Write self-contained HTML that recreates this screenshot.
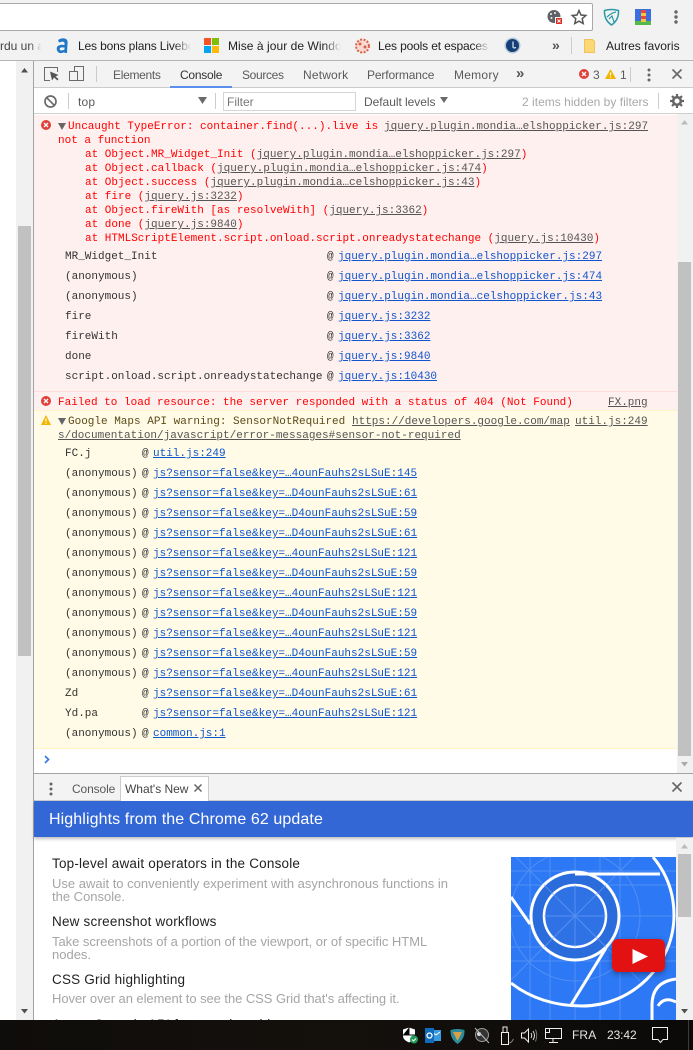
<!DOCTYPE html>
<html><head><meta charset="utf-8"><style>
*{box-sizing:border-box}
html,body{margin:0;padding:0;width:693px;height:1050px;overflow:hidden;background:#fff}
body{position:relative;font-family:"Liberation Sans",sans-serif}
.b{position:absolute}
.t{position:absolute;white-space:nowrap;font-size:12px;line-height:14px;color:#5a5a5a}
.m{position:absolute;white-space:pre;font-family:"Liberation Mono",monospace;font-size:11px;line-height:14px;color:#333;transform:translateY(1px)}
.r{color:#f00}
u{text-decoration:underline}
.g{color:#555}
.l{color:#15c}
.h{position:absolute;white-space:nowrap;font-size:13.5px;line-height:16px;color:#222;left:52px;letter-spacing:.2px}
.p{position:absolute;white-space:nowrap;font-size:13px;line-height:13px;color:#a5a5a5;left:52px}
svg{position:absolute;overflow:visible}
</style></head><body>

<!-- browser top -->
<div class="b" style="left:0;top:0;width:693px;height:61px;background:#f2f2f2"></div>
<div class="b" style="left:-4px;top:3px;width:597px;height:28px;background:#fff;border:1px solid #a9a9a9;border-radius:2px"></div>
<div class="b" style="left:0;top:60px;width:693px;height:1px;background:#b5b5b5"></div>

<!-- address icons -->
<svg style="left:546px;top:9px" width="18" height="18" viewBox="0 0 18 18"><circle cx="8" cy="7.5" r="6.5" fill="#5f6368"/><circle cx="5" cy="5" r="1" fill="#f2f2f2"/><circle cx="9" cy="4" r="1" fill="#f2f2f2"/><circle cx="5.5" cy="9" r="1" fill="#f2f2f2"/><rect x="9.500" y="8.500" width="7" height="7" fill="#d93025" stroke="#fff"/><path d="M11.500 10.500l3 3m0-3l-3 3" stroke="#fff"/></svg>
<svg style="left:571px;top:9px" width="16" height="16" viewBox="0 0 16 16"><path d="M8 1.500l2 4.500 4.800.5-3.600 3.200 1 4.800L8 12.100 3.800 14.500l1-4.800L1.200 6.500 6 6z" fill="none" stroke="#555" stroke-width="1.500"/></svg>
<svg style="left:603px;top:8px" width="17" height="18" viewBox="0 0 17 18"><path d="M1.500 2.500Q8.500 .5 15.500 2.500Q16 12 8.500 17Q1 12 1.500 2.500z" fill="none" stroke="#2b9aa8" stroke-width="1.500"/><path d="M4 9q4-4 9-5M6 11l3-3 2 6" fill="none" stroke="#2b9aa8" stroke-width="1.200"/></svg>
<div class="b" style="left:635px;top:9px;width:16px;height:16px;background:#3b6fe0"></div>
<div class="b" style="left:635px;top:21px;width:16px;height:4px;background:#55b84a"></div>
<div class="b" style="left:641px;top:10px;width:5px;height:12px;background:repeating-linear-gradient(#e64a3b 0 3px,#f4c542 3px 6px)"></div>
<svg style="left:673px;top:9px" width="6" height="16"><circle cx="3" cy="3" r="1.700" fill="#666"/><circle cx="3" cy="8" r="1.700" fill="#666"/><circle cx="3" cy="13" r="1.700" fill="#666"/></svg>

<!-- bookmarks -->
<div class="t" style="left:0;top:39px;font-size:12px;color:#444;width:42px;overflow:hidden;-webkit-mask-image:linear-gradient(90deg,#000 70%,transparent)">rdu un a</div>
<svg style="left:56px;top:37px" width="13" height="17" viewBox="0 0 13 17"><path d="M2 3Q6 0 10 2Q12 3 11.500 7L11 16H8.500V15Q5 17 2.500 15.500Q0 13 1 10Q3 7 8.500 8V6Q8 3.500 3 5.500z M4 11Q3 13 5 13.500Q7 13.500 8.500 12.500V10.500Q5 10 4 11z" fill="#1f78c8" fill-rule="evenodd"/></svg>
<div class="t" style="left:78px;top:39px;width:113px;overflow:hidden;color:#222;letter-spacing:-.15px;-webkit-mask-image:linear-gradient(90deg,#000 85%,transparent)">Les bons plans Livebox</div>
<div class="b" style="left:204px;top:38px;width:7px;height:7px;background:#f35325"></div>
<div class="b" style="left:212px;top:38px;width:7px;height:7px;background:#81bc06"></div>
<div class="b" style="left:204px;top:46px;width:7px;height:7px;background:#05a6f0"></div>
<div class="b" style="left:212px;top:46px;width:7px;height:7px;background:#ffba08"></div>
<div class="t" style="left:228px;top:39px;width:113px;overflow:hidden;color:#222;letter-spacing:.05px;-webkit-mask-image:linear-gradient(90deg,#000 85%,transparent)">Mise à jour de Windows</div>
<svg style="left:354px;top:38px" width="17" height="16" viewBox="0 0 17 16"><circle cx="8.500" cy="8" r="6.500" fill="#f7d9cf" stroke="#d9634a" stroke-width="2" stroke-dasharray="2 1.500"/><circle cx="6" cy="6" r="1.500" fill="#d9634a"/><circle cx="11" cy="9" r="1.500" fill="#d9634a"/></svg>
<div class="t" style="left:378px;top:39px;width:112px;overflow:hidden;color:#222;letter-spacing:-.15px;-webkit-mask-image:linear-gradient(90deg,#000 85%,transparent)">Les pools et espaces de</div>
<svg style="left:504px;top:37px" width="17" height="17" viewBox="0 0 17 17"><circle cx="8.500" cy="8.500" r="8" fill="#b4c8d6"/><circle cx="8.500" cy="8.500" r="6.500" fill="#163f78"/><path d="M9 4.500V10q0 1.500 3 .5" fill="none" stroke="#cfe0ee" stroke-width="1.300"/></svg>
<div class="t" style="left:552px;top:38px;color:#555;font-size:14px;font-weight:bold">»</div>
<div class="b" style="left:571px;top:37px;width:1px;height:17px;background:#ccc"></div>
<svg style="left:584px;top:39px" width="13" height="14" viewBox="0 0 13 14"><path d="M.5.500h8l2 2V13.500H.5z" fill="#fbd775" stroke="#eec45a"/></svg>
<div class="t" style="left:606px;top:39px;color:#222;letter-spacing:.02px">Autres favoris</div>

<!-- left page scrollbar -->
<div class="b" style="left:16px;top:61px;width:17px;height:959px;background:#f1f1f1"></div>
<div class="b" style="left:18px;top:226px;width:13px;height:430px;background:#c1c1c1"></div>
<svg style="left:21px;top:68px" width="7" height="5"><path d="M0 4.500L3.500 0 7 4.500z" fill="#505050"/></svg>
<svg style="left:21px;top:1009px" width="7" height="5"><path d="M0 0L3.500 4.500 7 0z" fill="#505050"/></svg>

<!-- devtools frame -->
<div class="b" style="left:33px;top:61px;width:1px;height:959px;background:#a3a3a3"></div>
<div class="b" style="left:34px;top:61px;width:659px;height:27px;background:#f3f3f3;border-bottom:1px solid #ccc"></div>
<div class="b" style="left:34px;top:88px;width:659px;height:26px;background:#fff;border-bottom:1px solid #d0d0d0"></div>

<!-- tab bar -->
<svg style="left:44px;top:66px" width="15" height="16" viewBox="0 0 15 16"><path d="M6 14.500H.5V1.500h13V6" fill="none" stroke="#6a6a6a"/><path d="M6 5.500l2 9 2-3 3.500 3 1-1.500-3-2.500 3-1.500z" fill="#555"/></svg>
<svg style="left:69px;top:66px" width="16" height="16" viewBox="0 0 16 16"><path d="M5.500 5V.5h9v14H9" fill="none" stroke="#6a6a6a"/><rect x=".5" y="5.500" width="8" height="9" fill="none" stroke="#6a6a6a"/></svg>
<div class="b" style="left:96px;top:66px;width:1px;height:16px;background:#ccc"></div>
<div class="t" style="left:113px;top:68px;letter-spacing:-.3px">Elements</div>
<div class="t" style="left:180px;top:68px;color:#333;letter-spacing:-.26px">Console</div>
<div class="b" style="left:170px;top:86px;width:62px;height:2px;background:#5a8ff0"></div>
<div class="t" style="left:242px;top:68px;letter-spacing:-.34px">Sources</div>
<div class="t" style="left:303px;top:68px;letter-spacing:.18px">Network</div>
<div class="t" style="left:367px;top:68px;letter-spacing:-.13px">Performance</div>
<div class="t" style="left:454px;top:68px;letter-spacing:.25px">Memory</div>
<div class="t" style="left:516px;top:67px;font-size:15px;font-weight:bold;color:#555">»</div>
<svg style="left:579px;top:69px" width="10" height="10"><circle cx="5" cy="5" r="5" fill="#e0403a"/><path d="M3 3l4 4m0-4L3 7" stroke="#fff" stroke-width="1.300"/></svg>
<div class="t" style="left:593px;top:68px">3</div>
<svg style="left:605px;top:69px" width="11" height="10"><path d="M5.500 0L11 10H0z" fill="#f4b400"/><path d="M5.500 3.500v3M5.500 7.500v1.200" stroke="#fff" stroke-width="1.200"/></svg>
<div class="t" style="left:620px;top:68px">1</div>
<div class="b" style="left:630px;top:67px;width:1px;height:15px;background:#ccc"></div>
<svg style="left:646px;top:68px" width="6" height="14"><circle cx="3" cy="2" r="1.500" fill="#666"/><circle cx="3" cy="7" r="1.500" fill="#666"/><circle cx="3" cy="12" r="1.500" fill="#666"/></svg>
<svg style="left:672px;top:69px" width="10" height="10"><path d="M.5.500l9 9m0-9l-9 9" stroke="#666" stroke-width="1.600"/></svg>

<!-- filter bar -->
<svg style="left:44px;top:95px" width="13" height="13" viewBox="0 0 13 13"><circle cx="6.500" cy="6.500" r="5.500" fill="none" stroke="#6a6a6a" stroke-width="1.700"/><path d="M2.700 2.700l7.600 7.600" stroke="#6a6a6a" stroke-width="1.700"/></svg>
<div class="b" style="left:68px;top:93px;width:1px;height:16px;background:#ccc"></div>
<div class="t" style="left:78px;top:95px;letter-spacing:.2px">top</div>
<svg style="left:198px;top:97px" width="9" height="7"><path d="M0 0h9L4.500 7z" fill="#6a6a6a"/></svg>
<div class="b" style="left:215px;top:93px;width:1px;height:16px;background:#ccc"></div>
<div class="b" style="left:223px;top:92px;width:133px;height:19px;border:1px solid #d5d5d5"></div>
<div class="t" style="left:227px;top:95px;color:#777">Filter</div>
<div class="t" style="left:364px;top:95px;letter-spacing:-.04px">Default levels</div>
<svg style="left:440px;top:97px" width="8" height="6"><path d="M0 0h8L4 6z" fill="#6a6a6a"/></svg>
<div class="t" style="left:522px;top:95px;color:#a8a8a8;letter-spacing:.02px">2 items hidden by filters</div>
<div class="b" style="left:658px;top:93px;width:1px;height:16px;background:#ccc"></div>
<svg style="left:670px;top:94px" width="14" height="14" viewBox="0 0 14 14"><circle cx="7" cy="7" r="3.800" fill="none" stroke="#666" stroke-width="2.600"/><path d="M7 0v3M7 11v3M0 7h3M11 7h3M2 2l2 2M10 10l2 2M2 12l2-2M10 4l2-2" stroke="#666" stroke-width="2.200"/></svg>

<!-- console backgrounds -->
<div class="b" style="left:34px;top:115px;width:643px;height:276px;background:#fff0f0"></div>
<div class="b" style="left:34px;top:391px;width:643px;height:20px;background:#fff0f0;border-top:1px solid #fdd;border-bottom:1px solid #fff5c2"></div>
<div class="b" style="left:34px;top:411px;width:643px;height:338px;background:#fffbe6;border-bottom:1px solid #fff5c2"></div>

<!-- right scrollbar -->
<div class="b" style="left:677px;top:114px;width:16px;height:659px;background:#f1f1f1"></div>
<div class="b" style="left:678px;top:262px;width:13px;height:494px;background:#c1c1c1"></div>
<svg style="left:681px;top:120px" width="7" height="5"><path d="M0 4.500L3.500 0 7 4.500z" fill="#bbb"/></svg>
<svg style="left:681px;top:762px" width="7" height="5"><path d="M0 0L3.500 4.500 7 0z" fill="#aaa"/></svg>

<!-- error -->
<svg style="left:41px;top:120px" width="10" height="10"><circle cx="5" cy="5" r="5" fill="#e0403a"/><path d="M3 3l4 4m0-4L3 7" stroke="#fff" stroke-width="1.300"/></svg>
<svg style="left:58px;top:123px" width="8" height="7"><path d="M0 0h8L4 7z" fill="#666"/></svg>
<div class="m r" style="left:68px;top:119px">Uncaught TypeError: container.find(...).live is</div>
<div class="m g" style="left:384px;top:119px"><u>jquery.plugin.mondia…elshoppicker.js:297</u></div>
<div class="m r" style="left:58px;top:133px">not a function</div>
<div class="m r" style="left:85px;top:147px">at Object.MR_Widget_Init (<u class="g">jquery.plugin.mondia…elshoppicker.js:297</u>)</div>
<div class="m r" style="left:85px;top:161px">at Object.callback (<u class="g">jquery.plugin.mondia…elshoppicker.js:474</u>)</div>
<div class="m r" style="left:85px;top:175px">at Object.success (<u class="g">jquery.plugin.mondia…celshoppicker.js:43</u>)</div>
<div class="m r" style="left:85px;top:189px">at fire (<u class="g">jquery.js:3232</u>)</div>
<div class="m r" style="left:85px;top:203px">at Object.fireWith [as resolveWith] (<u class="g">jquery.js:3362</u>)</div>
<div class="m r" style="left:85px;top:217px">at done (<u class="g">jquery.js:9840</u>)</div>
<div class="m r" style="left:85px;top:231px">at HTMLScriptElement.script.onload.script.onreadystatechange (<u class="g">jquery.js:10430</u>)</div>

<div class="m" style="left:65px;top:249px">MR_Widget_Init</div><div class="m" style="left:327px;top:249px">@</div><div class="m l" style="left:338px;top:249px"><u>jquery.plugin.mondia…elshoppicker.js:297</u></div>
<div class="m" style="left:65px;top:269px">(anonymous)</div><div class="m" style="left:327px;top:269px">@</div><div class="m l" style="left:338px;top:269px"><u>jquery.plugin.mondia…elshoppicker.js:474</u></div>
<div class="m" style="left:65px;top:289px">(anonymous)</div><div class="m" style="left:327px;top:289px">@</div><div class="m l" style="left:338px;top:289px"><u>jquery.plugin.mondia…celshoppicker.js:43</u></div>
<div class="m" style="left:65px;top:309px">fire</div><div class="m" style="left:327px;top:309px">@</div><div class="m l" style="left:338px;top:309px"><u>jquery.js:3232</u></div>
<div class="m" style="left:65px;top:329px">fireWith</div><div class="m" style="left:327px;top:329px">@</div><div class="m l" style="left:338px;top:329px"><u>jquery.js:3362</u></div>
<div class="m" style="left:65px;top:349px">done</div><div class="m" style="left:327px;top:349px">@</div><div class="m l" style="left:338px;top:349px"><u>jquery.js:9840</u></div>
<div class="m" style="left:65px;top:369px">script.onload.script.onreadystatechange</div><div class="m" style="left:327px;top:369px">@</div><div class="m l" style="left:338px;top:369px"><u>jquery.js:10430</u></div>

<!-- failed -->
<svg style="left:41px;top:396px" width="10" height="10"><circle cx="5" cy="5" r="5" fill="#e0403a"/><path d="M3 3l4 4m0-4L3 7" stroke="#fff" stroke-width="1.300"/></svg>
<div class="m r" style="left:58px;top:395px">Failed to load resource: the server responded with a status of 404 (Not Found)</div>
<div class="m g" style="left:608px;top:395px"><u>FX.png</u></div>

<!-- warning -->
<svg style="left:41px;top:415px" width="10" height="10"><path d="M5 0L10 10H0z" fill="#f4b400"/><path d="M5 3.500v3M5 7.500v1.200" stroke="#fff" stroke-width="1.200"/></svg>
<svg style="left:58px;top:418px" width="8" height="7"><path d="M0 0h8L4 7z" fill="#666"/></svg>
<div class="m" style="left:68px;top:414px;color:#5c4a1a">Google Maps API warning: SensorNotRequired</div>
<div class="m g" style="left:352px;top:414px"><u>https://developers.google.com/map</u></div>
<div class="m g" style="left:575px;top:414px"><u>util.js:249</u></div>
<div class="m g" style="left:58px;top:428px"><u>s/documentation/javascript/error-messages#sensor-not-required</u></div>

<div class="m" style="left:65px;top:446px">FC.j</div><div class="m" style="left:142px;top:446px">@</div><div class="m l" style="left:153px;top:446px"><u>util.js:249</u></div>
<div class="m" style="left:65px;top:466px">(anonymous)</div><div class="m" style="left:142px;top:466px">@</div><div class="m l" style="left:153px;top:466px"><u>js?sensor=false&amp;key=…4ounFauhs2sLSuE:145</u></div>
<div class="m" style="left:65px;top:486px">(anonymous)</div><div class="m" style="left:142px;top:486px">@</div><div class="m l" style="left:153px;top:486px"><u>js?sensor=false&amp;key=…D4ounFauhs2sLSuE:61</u></div>
<div class="m" style="left:65px;top:506px">(anonymous)</div><div class="m" style="left:142px;top:506px">@</div><div class="m l" style="left:153px;top:506px"><u>js?sensor=false&amp;key=…D4ounFauhs2sLSuE:59</u></div>
<div class="m" style="left:65px;top:526px">(anonymous)</div><div class="m" style="left:142px;top:526px">@</div><div class="m l" style="left:153px;top:526px"><u>js?sensor=false&amp;key=…D4ounFauhs2sLSuE:61</u></div>
<div class="m" style="left:65px;top:546px">(anonymous)</div><div class="m" style="left:142px;top:546px">@</div><div class="m l" style="left:153px;top:546px"><u>js?sensor=false&amp;key=…4ounFauhs2sLSuE:121</u></div>
<div class="m" style="left:65px;top:566px">(anonymous)</div><div class="m" style="left:142px;top:566px">@</div><div class="m l" style="left:153px;top:566px"><u>js?sensor=false&amp;key=…D4ounFauhs2sLSuE:59</u></div>
<div class="m" style="left:65px;top:586px">(anonymous)</div><div class="m" style="left:142px;top:586px">@</div><div class="m l" style="left:153px;top:586px"><u>js?sensor=false&amp;key=…4ounFauhs2sLSuE:121</u></div>
<div class="m" style="left:65px;top:606px">(anonymous)</div><div class="m" style="left:142px;top:606px">@</div><div class="m l" style="left:153px;top:606px"><u>js?sensor=false&amp;key=…D4ounFauhs2sLSuE:59</u></div>
<div class="m" style="left:65px;top:626px">(anonymous)</div><div class="m" style="left:142px;top:626px">@</div><div class="m l" style="left:153px;top:626px"><u>js?sensor=false&amp;key=…4ounFauhs2sLSuE:121</u></div>
<div class="m" style="left:65px;top:646px">(anonymous)</div><div class="m" style="left:142px;top:646px">@</div><div class="m l" style="left:153px;top:646px"><u>js?sensor=false&amp;key=…D4ounFauhs2sLSuE:59</u></div>
<div class="m" style="left:65px;top:666px">(anonymous)</div><div class="m" style="left:142px;top:666px">@</div><div class="m l" style="left:153px;top:666px"><u>js?sensor=false&amp;key=…4ounFauhs2sLSuE:121</u></div>
<div class="m" style="left:65px;top:686px">Zd</div><div class="m" style="left:142px;top:686px">@</div><div class="m l" style="left:153px;top:686px"><u>js?sensor=false&amp;key=…D4ounFauhs2sLSuE:61</u></div>
<div class="m" style="left:65px;top:706px">Yd.pa</div><div class="m" style="left:142px;top:706px">@</div><div class="m l" style="left:153px;top:706px"><u>js?sensor=false&amp;key=…4ounFauhs2sLSuE:121</u></div>
<div class="m" style="left:65px;top:726px">(anonymous)</div><div class="m" style="left:142px;top:726px">@</div><div class="m l" style="left:153px;top:726px"><u>common.js:1</u></div>

<!-- prompt -->
<svg style="left:44px;top:755px" width="6" height="9"><path d="M1 1l3.500 3.500L1 8" fill="none" stroke="#3b78e7" stroke-width="1.700"/></svg>

<!-- drawer -->
<div class="b" style="left:34px;top:773px;width:659px;height:1px;background:#a3a3a3"></div>
<div class="b" style="left:34px;top:774px;width:659px;height:27px;background:#f3f3f3;border-bottom:1px solid #ccc"></div>
<svg style="left:48px;top:782px" width="6" height="14"><circle cx="3" cy="2" r="1.500" fill="#666"/><circle cx="3" cy="7" r="1.500" fill="#666"/><circle cx="3" cy="12" r="1.500" fill="#666"/></svg>
<div class="t" style="left:72px;top:782px;letter-spacing:-.12px">Console</div>
<div class="b" style="left:120px;top:776px;width:89px;height:25px;background:#fff;border:1px solid #ccc;border-bottom:none"></div>
<div class="t" style="left:125px;top:782px;color:#444;letter-spacing:-.02px">What's New</div>
<svg style="left:194px;top:784px" width="8" height="8"><path d="M.5.500l7 7m0-7l-7 7" stroke="#666" stroke-width="1.500"/></svg>
<svg style="left:672px;top:782px" width="10" height="10"><path d="M.5.500l9 9m0-9l-9 9" stroke="#666" stroke-width="1.600"/></svg>

<div class="b" style="left:34px;top:801px;width:659px;height:36px;background:#3367d6;box-shadow:0 2px 3px rgba(0,0,0,.25)"></div>
<div class="t" style="left:49px;top:811px;font-size:16px;line-height:18px;color:#fff;letter-spacing:.1px">Highlights from the Chrome 62 update</div>

<div class="h" style="top:856px">Top-level await operators in the Console</div>
<div class="p" style="top:877px">Use await to conveniently experiment with asynchronous functions in</div>
<div class="p" style="top:890px">the Console.</div>
<div class="h" style="top:914px">New screenshot workflows</div>
<div class="p" style="top:935px;letter-spacing:-.03px">Take screenshots of a portion of the viewport, or of specific HTML</div>
<div class="p" style="top:948px">nodes.</div>
<div class="h" style="top:972px">CSS Grid highlighting</div>
<div class="p" style="top:992px;letter-spacing:-.06px">Hover over an element to see the CSS Grid that's affecting it.</div>
<div class="h" style="top:1017px">A new Console API for querying objects</div>

<!-- chrome image -->
<svg style="left:511px;top:857px;overflow:hidden" width="165" height="163" viewBox="511 857 165 163">
<rect x="511" y="857" width="165" height="163" fill="#2d78f4"/>
<g stroke="#6ea3f7" stroke-width="1" fill="none" opacity=".55">
<path d="M575 857V1020M511 916H676M511 852L640 981M511 980L640 851M530 857V1020M620 857V1020M550 857V1020M600 857V1020M511 871H676M511 961H676M511 885H676M511 947H676"/>
<circle cx="575" cy="916" r="65"/>
</g>
<circle cx="575" cy="916" r="44" fill="#2b6cdc" stroke="#fff" stroke-width="3"/>
<circle cx="575" cy="916" r="31" fill="#2f72e6" stroke="#fff" stroke-width="2.500"/>
<path d="M575 916L544 885M575 916L606 885M575 916L544 947M575 916L606 947M575 885V947M544 916H606" stroke="#6ea3f7" opacity=".6"/>
<g fill="none" stroke="#fff" stroke-width="3">
<path d="M575 874H660"/>
<path d="M511 897L530 924"/>
<path d="M606 948L571 1005"/>
<path d="M653 857C668 875 674 895 674 915C674 965 632 1006 582 1006C555 1006 530 998 511 983"/>
<path d="M676 979Q652 982 652 1005V1020"/>
<path d="M676 1002Q664 996 658 1006"/>
</g>
<rect x="612" y="939" width="53" height="33" rx="6" fill="#e31212" style="filter:drop-shadow(0 2px 3px rgba(0,0,0,.35))"/>
<path d="M632.500 949V964L648 956.500z" fill="#fff"/>
</svg>

<!-- bottom right scrollbar -->
<div class="b" style="left:676px;top:838px;width:17px;height:182px;background:#f1f1f1"></div>
<div class="b" style="left:678px;top:854px;width:13px;height:63px;background:#c1c1c1"></div>
<svg style="left:681px;top:844px" width="7" height="5"><path d="M0 4.500L3.500 0 7 4.500z" fill="#bbb"/></svg>
<svg style="left:681px;top:1009px" width="7" height="5"><path d="M0 0L3.500 4.500 7 0z" fill="#505050"/></svg>

<!-- taskbar -->
<div class="b" style="left:0;top:1020px;width:693px;height:30px;background:linear-gradient(90deg,#0f0d0b,#14100c 50%,#0b0a09)"></div>
<svg style="left:402px;top:1027px" width="16" height="17" viewBox="0 0 16 17"><path d="M1 2.500L7 .5l6 2V9q0 4-6 6.500Q1 13 1 9z" fill="#fff"/><path d="M7 .5V8H1M7 8h6" stroke="#111" stroke-width="1"/><circle cx="12" cy="12.500" r="4" fill="#1f9d55"/><path d="M10 12.500l1.500 1.500 2.500-2.500" fill="none" stroke="#fff" stroke-width="1"/></svg>
<svg style="left:425px;top:1028px" width="16" height="15" viewBox="0 0 16 15"><rect x="6" y="2" width="10" height="11" fill="#3a9ce0"/><path d="M7 4l4 3 4-3" fill="none" stroke="#fff"/><rect width="9" height="15" fill="#0f6cbd"/><circle cx="4.500" cy="7.500" r="2.500" fill="none" stroke="#fff" stroke-width="1.300"/></svg>
<svg style="left:450px;top:1028px" width="15" height="16" viewBox="0 0 15 16"><path d="M.5 2Q7.500 0 14.500 2Q15 11 7.500 16Q0 11 .5 2z" fill="#2c8c99"/><path d="M3 4h9L7.500 13z" fill="#d9a04c"/></svg>
<svg style="left:473px;top:1026px" width="18" height="19" viewBox="0 0 18 19"><circle cx="9" cy="9" r="6.500" fill="#333" stroke="#999"/><circle cx="6" cy="8" r="2" fill="#ddd"/><path d="M2 2l14 15" stroke="#bbb"/></svg>
<svg style="left:500px;top:1026px" width="14" height="19" viewBox="0 0 14 19"><path d="M1.500 6.500h7v12h-7zM3 6.500V1h4v5.500" fill="none" stroke="#eee"/><path d="M9.500 17l2-1 2-3" fill="none" stroke="#888"/></svg>
<svg style="left:521px;top:1028px" width="16" height="15" viewBox="0 0 16 15"><path d="M.5 5h3L7.500 1v13l-4-4h-3z" fill="none" stroke="#eee"/><path d="M10 5q1.500 2.500 0 5M12 3q3 4.500 0 9" fill="none" stroke="#ddd"/><path d="M14.500 1.500q2.500 6 0 12" fill="none" stroke="#777"/></svg>
<svg style="left:545px;top:1028px" width="17" height="15" viewBox="0 0 17 15"><path d="M4 .5h12.500v10H.5V5M8 10.500v3.500M4 14.500h9" fill="none" stroke="#eee"/><rect x=".5" y=".5" width="4" height="4" fill="#111" stroke="#eee"/></svg>
<div class="t" style="left:572px;top:1028px;color:#e6e6e6;letter-spacing:.1px">FRA</div>
<div class="t" style="left:607px;top:1028px;color:#e6e6e6;letter-spacing:-.1px">23:42</div>
<svg style="left:652px;top:1027px" width="17" height="17" viewBox="0 0 17 17"><path d="M.5.500h15v12H11l-2.500 3-2.500-3H.5z" fill="none" stroke="#eee"/></svg>
<div class="b" style="left:688px;top:1020px;width:1px;height:30px;background:#3a3a3a"></div>

</body></html>
